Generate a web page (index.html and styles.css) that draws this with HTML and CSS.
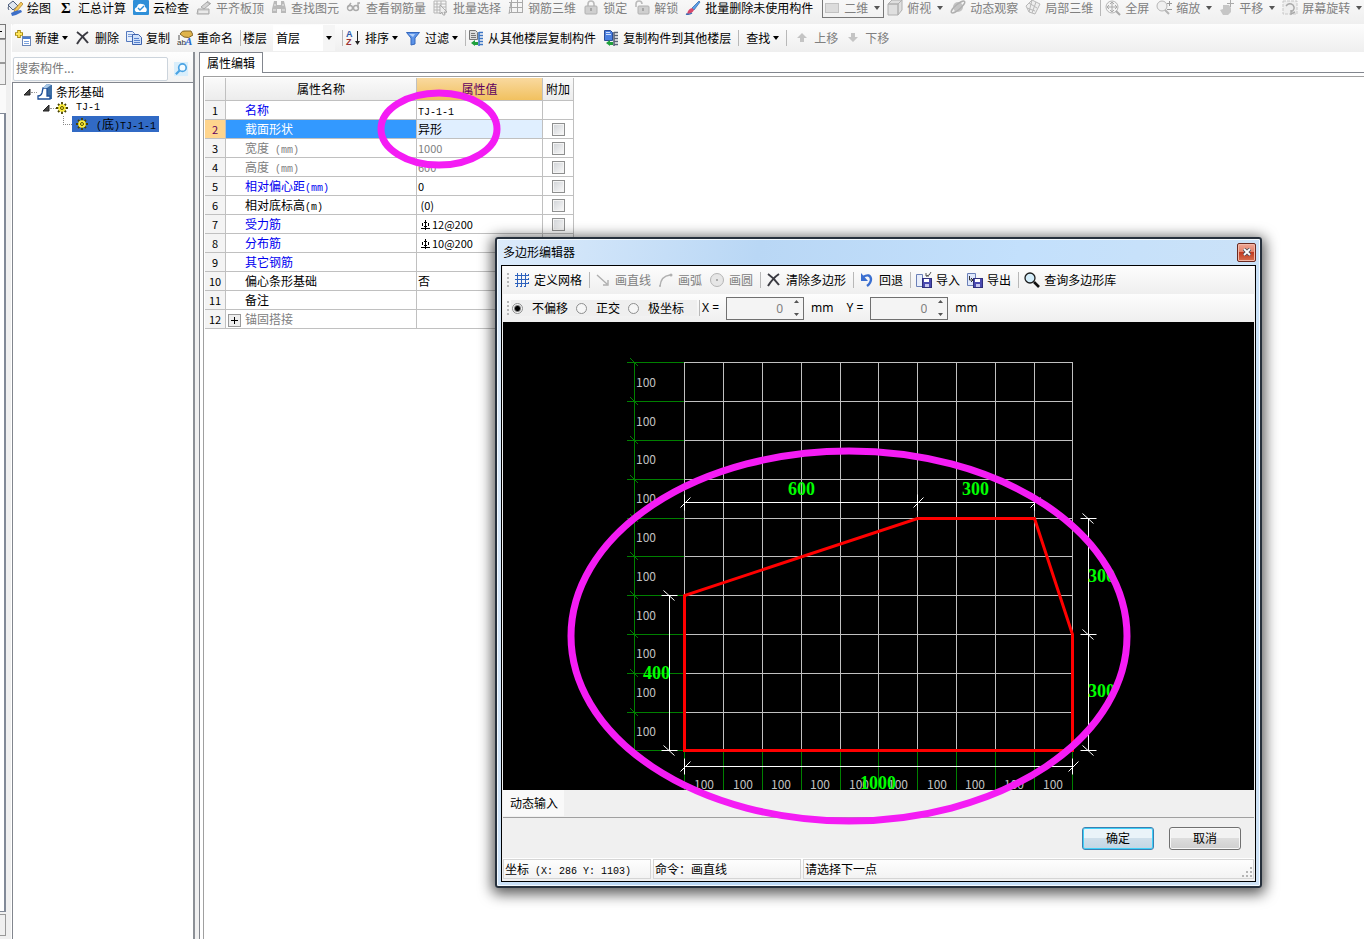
FILE: index.html
```html
<!DOCTYPE html>
<html lang="zh-CN">
<head>
<meta charset="utf-8">
<title>属性编辑</title>
<link rel="stylesheet" href="styles.css">
</head>
<body>
<svg class="defs" aria-hidden="true">
  <defs>
    <symbol id="i-draw" viewBox="0 0 16 16"><path d="M1 5l5-4 5 5-5 4z" fill="#dfe6f0" stroke="#4a5a78"/><path d="M2 6q-2 2 0 4" fill="none" stroke="#4a5a78"/><path d="M14 2l2 2-6 7-3 1 1-3z" fill="#f5c95a" stroke="#a5782a" stroke-width=".7"/><path d="M4 13q5-3 10-3l1 2q-5 3-10 4z" fill="#3d6fc8"/></symbol>
    <symbol id="i-cloud" viewBox="0 0 16 16"><rect width="16" height="15" rx="1" fill="#2f8fd8"/><path d="M3 12q-3-3 1-5 1-4 5-3 3 0 3 3 3 2 1 5z" fill="#fff"/><path d="M5 8l2 2 4-4" fill="none" stroke="#2f8fd8" stroke-width="1.400"/></symbol>
    <symbol id="i-slab" viewBox="0 0 16 16"><path d="M5 7l6-5 3 2-6 5zM11 1l4 3M2 9h11v5H1z" fill="#d4d4d4" stroke="#a8a8a8"/><path d="M3 12h9" stroke="#fff"/></symbol>
    <symbol id="i-binoc" viewBox="0 0 16 16"><path d="M3 1h3v4h4V1h3l2 8v4h-5V9H6v4H1V9z" fill="#b9b9b9"/><path d="M3 5h2M11 5h2M2 10h3M11 10h3" stroke="#eee"/></symbol>
    <symbol id="i-glasses" viewBox="0 0 16 16"><g fill="none" stroke="#aaa" stroke-width="1.400"><circle cx="4" cy="8" r="2.500"/><circle cx="10" cy="8" r="2.500"/><path d="M6.500 8h1M2 7l3-4M12 8V3h2"/></g></symbol>
    <symbol id="i-batch" viewBox="0 0 16 16"><path d="M1 1h12v12H1zM1 4h12M1 7h12M1 10h12M4 1v12M8 1v12" fill="none" stroke="#b5b5b5"/><path d="M7 5l7 7-3 0 1 3-2 0-1-3-2 2z" fill="#eee" stroke="#999" stroke-width=".7"/></symbol>
    <symbol id="i-mesh" viewBox="0 0 16 16"><path d="M3.500 0v12M9.500 0v13M14.500 0v13M1 2.500h14M1 7.500h14M1 12.500h14M3 2L1 14" fill="none" stroke="#aaa"/></symbol>
    <symbol id="i-lock" viewBox="0 0 16 16"><path d="M5 7V4q0-3 3-3t3 3v3" fill="none" stroke="#bbb" stroke-width="1.600"/><rect x="2" y="6" width="12" height="8" rx="1" fill="#cfcfcf" stroke="#b0b0b0"/><path d="M8 8v3" stroke="#999" stroke-width="1.500"/></symbol>
    <symbol id="i-unlock" viewBox="0 0 16 16"><path d="M2 7V4q0-3 3-3t3 3" fill="none" stroke="#bbb" stroke-width="1.600"/><rect x="4" y="6" width="11" height="8" rx="1" fill="#cfcfcf" stroke="#b0b0b0"/><path d="M9 8v3" stroke="#999" stroke-width="1.500"/></symbol>
    <symbol id="i-brush" viewBox="0 0 16 16"><path d="M14 1L7 8l2 2 6-8z" fill="#5aa0e8" stroke="#2d62a8" stroke-width=".7"/><path d="M7 8q-4 1-5 6 5 0 7-4z" fill="#d8486a"/><path d="M1 14q3 1 6-1" fill="none" stroke="#3968b0" stroke-width="1.500"/></symbol>
    <symbol id="i-rect" viewBox="0 0 16 16"><rect x="1.500" y="3.500" width="13" height="9" fill="#dcdcdc" stroke="#c2c2c2"/></symbol>
    <symbol id="i-cube" viewBox="0 0 16 16"><path d="M1 4l4-4h10l-4 4zM11 4l4-4v10l-4 5zM1 4h10v11H1z" fill="#dfdfdf" stroke="#b0b0b0"/></symbol>
    <symbol id="i-orbit" viewBox="0 0 16 16"><circle cx="8" cy="7" r="5" fill="#c4c4c4"/><ellipse cx="8" cy="7" rx="8.500" ry="2.500" transform="rotate(-40 8 7)" fill="none" stroke="#b0b0b0" stroke-width="1.400"/></symbol>
    <symbol id="i-part" viewBox="0 0 16 16"><path d="M1 6l6-6 8 4-5 10-6-2zM4 3l8 5M7 0l-3 12M11 2l-4 11M2 8l8 3" fill="#eee" stroke="#b8b8b8"/></symbol>
    <symbol id="i-full" viewBox="0 0 16 16"><circle cx="7" cy="7" r="6" fill="#f3f3f3" stroke="#b5b5b5"/><path d="M7 2v10M2 7h10M5 4l2-2 2 2M5 10l2 2 2-2M4 5L2 7l2 2M10 5l2 2-2 2" fill="none" stroke="#aaa"/><path d="M11 11l4 4" stroke="#aaa" stroke-width="2"/></symbol>
    <symbol id="i-zoom" viewBox="0 0 16 16"><circle cx="6" cy="6" r="5" fill="#f0f0f0" stroke="#b5b5b5"/><path d="M9 10l4 4" stroke="#b5b5b5" stroke-width="2"/><path d="M13.500 1v5M11 3.500h5M11 9.500h5" stroke="#999"/></symbol>
    <symbol id="i-pan" viewBox="0 0 16 16"><path d="M1 10l3-1V5h6l2 3v4l-3 3H4z" fill="#c6c6c6"/><path d="M11.500 0v7M8 3.500h7" fill="none" stroke="#aaa"/></symbol>
    <symbol id="i-rot" viewBox="0 0 16 16"><rect x="1" y="1" width="14" height="13" fill="#eee" stroke="#c8c8c8" stroke-dasharray="3 1"/><path d="M4 6q3-4 7-1 3 4-2 7M9 10v4l4-2" fill="none" stroke="#aaa" stroke-width="1.400"/></symbol>
    <symbol id="i-new" viewBox="0 0 16 16"><path d="M4 0v8M0 4h8" stroke="#a88a10" stroke-width="3.600"/><path d="M4 1v6M1 4h6" stroke="#ffe558" stroke-width="1.800"/><rect x="7.500" y="6.500" width="8" height="9" fill="#fff" stroke="#6a86b8"/><path d="M8 8h7" stroke="#4a7bd0" stroke-width="2"/><path d="M9 11.500h5M9 13.500h5" stroke="#7ba3df"/></symbol>
    <symbol id="i-x" viewBox="0 0 16 16"><path d="M2 2q6 4 11 11M13 2Q7 6 2 14" fill="none" stroke="#3b3b42" stroke-width="2"/></symbol>
    <symbol id="i-copy" viewBox="0 0 16 16"><path d="M.5 1.500h6l2 2v8h-8z" fill="#e4eefc" stroke="#5479be"/><path d="M2 4.500h4M2 6.500h4" stroke="#7a9bd8"/><path d="M6.500 4.500h6l3 3v7h-9z" fill="#cfe0fa" stroke="#3d62ad"/><path d="M8 8.500h5M8 10.500h6M8 12.500h6" stroke="#5a84cf"/></symbol>
    <symbol id="i-rename" viewBox="0 0 16 16"><path d="M3 4q2-4 6-3h5l2 4q-4 4-9 2z" fill="#dfb34b" stroke="#84662b"/><path d="M2 5v5" stroke="#555"/><text x="0" y="15" class="g-ab">ab</text><text x="8" y="15" class="g-a">A</text></symbol>
    <symbol id="i-sort" viewBox="0 0 16 16"><text x="1" y="7" class="g-sa">A</text><text x="1" y="15" class="g-sz">Z</text><path d="M12.500 1v12" stroke="#222"/><path d="M10 11h5l-2.500 4z" fill="#222"/></symbol>
    <symbol id="i-filter" viewBox="0 0 16 16"><path d="M1.500 2.500h13L10 8v6l-4 1V8z" fill="#5c93e8" stroke="#3568bd"/><path d="M4 4h6L8 7z" fill="#b5d2fb"/></symbol>
    <symbol id="i-from" viewBox="0 0 16 16"><path d="M1.500 .5h6l2 2v7h-8z" fill="#ddd" stroke="#777"/><path d="M3 3.500h4M3 5.500h5M3 7.500h5" stroke="#777"/><path d="M11 2v14M11 2.500h4M11 5.500h4M11 8.500h4M11 11.500h4M11 14.500h4" stroke="#3d76c4" stroke-width="1.600"/><path d="M3 13l4-3v2h3v3H7v1z" fill="#1fa03c"/></symbol>
    <symbol id="i-to" viewBox="0 0 16 16"><path d="M1.500 .5h6l2 2v8h-8z" fill="#4a7fe0" stroke="#2b4d98"/><path d="M3 2.500h4M3 4.500h5" stroke="#cfe0ff"/><path d="M11 2v14M11 2.500h4M11 5.500h4M11 8.500h4M11 11.500h4M11 14.500h4" stroke="#5a6478" stroke-width="1.600"/><path d="M3 13l4-3v2h3v3H7v1z" fill="#1fa03c"/></symbol>
    <symbol id="i-up" viewBox="0 0 16 16"><path d="M8 3l5 5h-3v4H6V8H3z" fill="#c4c4c4"/></symbol>
    <symbol id="i-down" viewBox="0 0 16 16"><path d="M8 12L3 7h3V3h4v4h3z" fill="#c4c4c4"/></symbol>
    <symbol id="i-search" viewBox="0 0 16 16"><rect width="15" height="15" fill="#d9eefb"/><circle cx="9" cy="6" r="4" fill="#f4fbff" stroke="#4ba3e3" stroke-width="1.800"/><path d="M6 9l-4 4" stroke="#4ba3e3" stroke-width="2.400"/></symbol>
    <symbol id="i-found" viewBox="0 0 16 16"><path d="M6 4l4-4 5 1v14h-4z" fill="#3d6ea5"/><path d="M1 15v-3q3 0 4-3l1-5h4v8h3v3z" fill="#fff" stroke="#1e4f98" stroke-width="1.300"/><path d="M6 4l4-4 4 1-4 3z" fill="#a9c9e8"/></symbol>
    <symbol id="i-gear" viewBox="0 0 12 12"><path d="M6 0v12M0 6h12M2 2l8 8M10 2l-8 8" stroke="#4a4400" stroke-width="1.800"/><circle cx="6" cy="6" r="3.800" fill="#ffef3a"/><circle cx="6" cy="6" r="1.500" fill="none" stroke="#5a5200"/></symbol>
    <symbol id="i-grid" viewBox="0 0 16 16"><path d="M3.500 1v14M7.500 1v14M11.500 1v14M1 3.500h14M1 7.500h14M1 11.500h14" stroke="#2e62bd"/><path d="M14.500 2v12M2 14.500h12" stroke="#2e62bd" stroke-dasharray="2 2"/></symbol>
    <symbol id="i-line" viewBox="0 0 16 16"><path d="M2 3l10 9M13 8v5H8" fill="none" stroke="#b0b0b0" stroke-width="1.400"/></symbol>
    <symbol id="i-arc" viewBox="0 0 16 16"><path d="M2 14Q3 4 12 3" fill="none" stroke="#b0b0b0" stroke-width="1.400"/><circle cx="13" cy="3" r="1.500" fill="#b0b0b0"/><circle cx="2" cy="14" r="1" fill="#b0b0b0"/></symbol>
    <symbol id="i-circle" viewBox="0 0 16 16"><circle cx="8" cy="8" r="6.500" fill="#e6e6e6" stroke="#b5b5b5"/><circle cx="8" cy="8" r="1" fill="#999"/></symbol>
    <symbol id="i-undo" viewBox="0 0 16 16"><path d="M4 5q7-4 8 2 0 4-4 7" fill="none" stroke="#3b6fd0" stroke-width="2.400"/><path d="M2 1v8h7z" fill="#3b6fd0"/></symbol>
    <symbol id="i-import" viewBox="0 0 16 16"><path d="M.5 2.500h6v12h-6z" fill="#e8eefb" stroke="#6b80b8"/><path d="M10 4q4 0 5-4M10 1v3h3" fill="none" stroke="#555"/><rect x="6.500" y="6.500" width="9" height="9" fill="#4a4ab0" stroke="#30307c"/><path d="M8 7h5v3H8z" fill="#fff"/><path d="M9 12h4v3H9z" fill="#c8c8f0"/></symbol>
    <symbol id="i-export" viewBox="0 0 16 16"><path d="M.5 1.500h8v12h-8z" fill="#dfe8fb" stroke="#6b80b8"/><path d="M2.500 4v4h3M4 6l2 2-2 2" fill="none" stroke="#333"/><rect x="6.500" y="6.500" width="9" height="9" fill="#4a4ab0" stroke="#30307c"/><path d="M8 7h5v3H8z" fill="#fff"/><path d="M9 12h4v3H9z" fill="#c8c8f0"/></symbol>
    <symbol id="i-query" viewBox="0 0 16 16"><circle cx="6" cy="6" r="5" fill="#d3edfa" stroke="#1c1c1c" stroke-width="1.300"/><path d="M10 10l5 5" stroke="#111" stroke-width="2.600"/></symbol>
    <symbol id="i-rebar" viewBox="0 0 10 10"><path d="M4.500 0v10M3 2.500h3M3 6.500h3M1.500 3v3M7.500 3v3M0 8.500h9" fill="none" stroke="#000"/></symbol>
    <symbol id="i-arrow" viewBox="0 0 6 4"><path d="M0 0h6L3 4z" fill="currentColor"/></symbol>
    <symbol id="i-twisty" viewBox="0 0 8 8"><path d="M7 1v6H1z" fill="#444" stroke="#222"/></symbol>
  </defs>
</svg>

<header class="toolbar top-bar">
  <button class="tool"><svg><use href="#i-draw"/></svg>绘图</button>
  <button class="tool"><span class="sigma">Σ</span>汇总计算</button>
  <button class="tool"><svg><use href="#i-cloud"/></svg>云检查</button>
  <button class="tool off"><svg><use href="#i-slab"/></svg>平齐板顶</button>
  <button class="tool off"><svg><use href="#i-binoc"/></svg>查找图元</button>
  <button class="tool off"><svg><use href="#i-glasses"/></svg>查看钢筋量</button>
  <button class="tool off"><svg><use href="#i-batch"/></svg>批量选择</button>
  <button class="tool off"><svg><use href="#i-mesh"/></svg>钢筋三维</button>
  <button class="tool off"><svg><use href="#i-lock"/></svg>锁定</button>
  <button class="tool off"><svg><use href="#i-unlock"/></svg>解锁</button>
  <button class="tool"><svg><use href="#i-brush"/></svg>批量删除未使用构件</button>
  <button class="tool off boxed"><svg><use href="#i-rect"/></svg>二维<svg class="arrow"><use href="#i-arrow"/></svg></button>
  <button class="tool off"><svg><use href="#i-cube"/></svg>俯视<svg class="arrow"><use href="#i-arrow"/></svg></button>
  <button class="tool off"><svg><use href="#i-orbit"/></svg>动态观察</button>
  <button class="tool off"><svg><use href="#i-part"/></svg>局部三维</button>
  <span class="sep"></span>
  <button class="tool off"><svg><use href="#i-full"/></svg>全屏</button>
  <button class="tool off"><svg><use href="#i-zoom"/></svg>缩放<svg class="arrow"><use href="#i-arrow"/></svg></button>
  <button class="tool off"><svg><use href="#i-pan"/></svg>平移<svg class="arrow"><use href="#i-arrow"/></svg></button>
  <button class="tool off"><svg><use href="#i-rot"/></svg>屏幕旋转<svg class="arrow"><use href="#i-arrow"/></svg></button>
</header>

<div class="workspace">
  <aside class="dock">
    <div class="dock-close"></div>
    <div class="dock-tab tall"></div>
    <div class="dock-tab"></div>
    <div class="dock-gap"></div>
    <div class="dock-pane"></div>
    <div class="dock-tab last"></div>
  </aside>
  <div class="content">
    <div class="toolbar sub-bar">
      <button class="tool"><svg><use href="#i-new"/></svg>新建<svg class="arrow"><use href="#i-arrow"/></svg></button>
      <button class="tool"><svg><use href="#i-x"/></svg>删除</button>
      <button class="tool"><svg><use href="#i-copy"/></svg>复制</button>
      <button class="tool"><svg><use href="#i-rename"/></svg>重命名</button>
      <span class="sep"></span>
      <label class="floor">楼层<span class="combo"><select><option>首层</option></select><svg class="arrow"><use href="#i-arrow"/></svg></span></label>
      <span class="sep"></span>
      <button class="tool"><svg><use href="#i-sort"/></svg>排序<svg class="arrow"><use href="#i-arrow"/></svg></button>
      <button class="tool"><svg><use href="#i-filter"/></svg>过滤<svg class="arrow"><use href="#i-arrow"/></svg></button>
      <span class="sep"></span>
      <button class="tool"><svg><use href="#i-from"/></svg>从其他楼层复制构件</button>
      <button class="tool"><svg><use href="#i-to"/></svg>复制构件到其他楼层</button>
      <span class="sep wide"></span>
      <button class="tool">查找<svg class="arrow"><use href="#i-arrow"/></svg></button>
      <span class="sep wide"></span>
      <button class="tool off"><svg><use href="#i-up"/></svg>上移</button>
      <button class="tool off"><svg><use href="#i-down"/></svg>下移</button>
    </div>
    <div class="panes">
      <nav class="nav">
        <form class="search">
          <input type="text" placeholder="搜索构件..." aria-label="搜索构件">
          <button type="button" aria-label="搜索"><svg><use href="#i-search"/></svg></button>
        </form>
        <ul class="tree">
          <li class="node l1"><svg class="twisty"><use href="#i-twisty"/></svg><i class="dots"></i><svg><use href="#i-found"/></svg><span>条形基础</span></li>
          <li class="node l2"><svg class="twisty"><use href="#i-twisty"/></svg><i class="dots"></i><svg class="gear"><use href="#i-gear"/></svg><span class="mono">TJ-1</span></li>
          <li class="node l3"><i class="elbow"></i><span class="selected"><svg class="gear"><use href="#i-gear"/></svg><span><span class="mono">(</span>底<span class="mono">)TJ-1-1</span></span></span></li>
        </ul>
      </nav>
      <main class="props">
        <div class="tabs"><button class="tab">属性编辑</button></div>
        <div class="sheet">
          <table class="grid">
            <colgroup><col class="c-no"><col class="c-name"><col class="c-val"><col class="c-add"></colgroup>
            <thead><tr><th></th><th>属性名称</th><th class="hot">属性值</th><th>附加</th></tr></thead>
            <tbody>
              <tr><th>1</th><td class="name blue">名称</td><td><span class="mono">TJ-1-1</span></td><td></td></tr>
              <tr class="current"><th>2</th><td class="name">截面形状</td><td>异形</td><td class="chk"><input type="checkbox" aria-label="附加 截面形状"></td></tr>
              <tr class="dim"><th>3</th><td class="name">宽度<span class="mono"> (mm)</span></td><td><span class="num">1000</span></td><td class="chk"><input type="checkbox" aria-label="附加 宽度"></td></tr>
              <tr class="dim"><th>4</th><td class="name">高度<span class="mono"> (mm)</span></td><td><span class="num">600</span></td><td class="chk"><input type="checkbox" aria-label="附加 高度"></td></tr>
              <tr><th>5</th><td class="name blue">相对偏心距<span class="mono">(mm)</span></td><td><span class="num">0</span></td><td class="chk"><input type="checkbox" aria-label="附加 相对偏心距"></td></tr>
              <tr><th>6</th><td class="name">相对底标高<span class="mono">(m)</span></td><td><span class="num">&nbsp;(0)</span></td><td class="chk"><input type="checkbox" aria-label="附加 相对底标高"></td></tr>
              <tr><th>7</th><td class="name blue">受力筋</td><td><svg class="rebar"><use href="#i-rebar"/></svg><span class="num">12@200</span></td><td class="chk"><input type="checkbox" aria-label="附加 受力筋"></td></tr>
              <tr><th>8</th><td class="name blue">分布筋</td><td><svg class="rebar"><use href="#i-rebar"/></svg><span class="num">10@200</span></td><td class="chk"><input type="checkbox" aria-label="附加 分布筋"></td></tr>
              <tr><th>9</th><td class="name blue">其它钢筋</td><td></td><td class="chk"><input type="checkbox" aria-label="附加 其它钢筋"></td></tr>
              <tr><th>10</th><td class="name">偏心条形基础</td><td>否</td><td class="chk"><input type="checkbox" aria-label="附加 偏心条形基础"></td></tr>
              <tr><th>11</th><td class="name">备注</td><td></td><td class="chk"><input type="checkbox" aria-label="附加 备注"></td></tr>
              <tr class="dim"><th>12</th><td class="name group"><button class="plus" aria-label="展开"></button>锚固搭接</td><td></td><td></td></tr>
            </tbody>
          </table>
        </div>
      </main>
    </div>
  </div>
</div>

<section class="dialog" role="dialog" aria-label="多边形编辑器">
  <div class="title"><h1>多边形编辑器</h1><button class="close" aria-label="关闭"><svg viewBox="0 0 8 8"><path d="M1 1l6 6M7 1L1 7" stroke="#444c5c" stroke-width="3.400"/><path d="M1 1l6 6M7 1L1 7" stroke="#fff" stroke-width="1.800"/></svg></button></div>
  <div class="frame">
    <div class="toolbar dlg-bar">
      <i class="grip"></i>
      <button class="tool"><svg><use href="#i-grid"/></svg>定义网格</button>
      <span class="sep"></span>
      <button class="tool off"><svg><use href="#i-line"/></svg>画直线</button>
      <button class="tool off"><svg><use href="#i-arc"/></svg>画弧</button>
      <button class="tool off"><svg><use href="#i-circle"/></svg>画圆</button>
      <span class="sep"></span>
      <button class="tool"><svg><use href="#i-x"/></svg>清除多边形</button>
      <span class="sep"></span>
      <button class="tool"><svg><use href="#i-undo"/></svg>回退</button>
      <span class="sep"></span>
      <button class="tool"><svg><use href="#i-import"/></svg>导入</button>
      <button class="tool"><svg><use href="#i-export"/></svg>导出</button>
      <span class="sep"></span>
      <button class="tool"><svg><use href="#i-query"/></svg>查询多边形库</button>
    </div>
    <div class="toolbar offset-bar">
      <i class="grip"></i>
      <div class="modes">
        <label><input type="radio" name="mode" checked>不偏移</label>
        <label><input type="radio" name="mode">正交</label>
        <label><input type="radio" name="mode">极坐标</label>
      </div>
      <span class="sep"></span>
      <label class="axis">X =<span class="spin"><input type="text" value="0" disabled><svg viewBox="0 0 5 16"><path d="M0 3h5L2.500 0zM0 13h5L2.500 16z" fill="#555"/></svg></span>mm</label>
      <label class="axis">Y =<span class="spin"><input type="text" value="0" disabled><svg viewBox="0 0 5 16"><path d="M0 3h5L2.500 0zM0 13h5L2.500 16z" fill="#555"/></svg></span>mm</label>
    </div>
    <svg class="canvas" viewBox="0 0 751 468" preserveAspectRatio="xMinYMin meet">
      <defs>
        <path id="tick" d="M-4-4l8 8"/>
        <path id="slash" d="M-4 5l10-10M0-8v16"/>
        <path id="back" d="M-6-5l11 10M-8 0h16"/>
      </defs>
      <path class="green" d="M131.500 40v388M124 40.500h57M124 79.500h57M124 118.500h57M124 157.500h57M124 196.500h57M124 234.500h57M124 273.500h57M124 312.500h57M124 351.500h57M124 390.500h57M124 428.500h57M181.500 428v40M220.500 428v40M259.500 428v40M298.500 428v40M337.500 428v40M375.500 428v40M414.500 428v40M453.500 428v40M492.500 428v40M531.500 428v40M569.500 428v40"/>
      <g class="green"><use href="#tick" x="131" y="40"/><use href="#tick" x="131" y="79"/><use href="#tick" x="131" y="118"/><use href="#tick" x="131" y="157"/><use href="#tick" x="131" y="196"/><use href="#tick" x="131" y="234"/><use href="#tick" x="131" y="273"/><use href="#tick" x="131" y="312"/><use href="#tick" x="131" y="351"/><use href="#tick" x="131" y="390"/></g>
      <path class="mesh" d="M181 40.500h389M181 79.500h389M181 118.500h389M181 157.500h389M181 196.500h389M181 234.500h389M181 273.500h389M181 312.500h389M181 351.500h389M181 390.500h389M181.500 40v388M220.500 40v388M259.500 40v388M298.500 40v388M337.500 40v388M375.500 40v388M414.500 40v388M453.500 40v388M492.500 40v388M531.500 40v388M569.500 40v388"/>
      <g class="scale">
        <text x="133" y="65">100</text><text x="133" y="104">100</text><text x="133" y="142">100</text><text x="133" y="181">100</text><text x="133" y="220">100</text><text x="133" y="259">100</text><text x="133" y="298">100</text><text x="133" y="336">100</text><text x="133" y="375">100</text><text x="133" y="414">100</text>
        <text x="191" y="467">100</text><text x="230" y="467">100</text><text x="268" y="467">100</text><text x="307" y="467">100</text><text x="346" y="467">100</text><text x="385" y="467">100</text><text x="424" y="467">100</text><text x="462" y="467">100</text><text x="501" y="467">100</text><text x="540" y="467">100</text>
      </g>
      <g class="dims">
        <path d="M181 180.500h350M585.500 196v232M166.500 273v155M181 444.500h388"/>
        <use href="#slash" x="181.500" y="180.500"/><use href="#slash" x="414.500" y="180.500"/><use href="#slash" x="531.500" y="180.500"/>
        <use href="#back" x="585.500" y="196.500"/><use href="#back" x="585.500" y="312.500"/><use href="#back" x="585.500" y="428.500"/>
        <use href="#back" x="166.500" y="273.500"/><use href="#back" x="166.500" y="428.500"/>
        <use href="#slash" x="181.500" y="444.500"/><use href="#slash" x="569.500" y="444.500"/>
      </g>
      <path class="shape" d="M181.500 428.500V273.500L414.500 196.500H531.500L569.500 312.500V428.500z"/>
      <g class="values"><text x="285" y="173">600</text><text x="459" y="173">300</text><text x="140" y="357">400</text><text x="585" y="260">300</text><text x="585" y="375">300</text><text x="357" y="467">1000</text></g>
    </svg>
    <div class="dynamic"><button>动态输入</button></div>
    <div class="actions"><button class="btn primary">确定</button><button class="btn">取消</button></div>
    <footer class="status"><span>坐标<span class="mono"> (X: 286 Y: 1103)</span></span><span>命令：画直线</span><span>请选择下一点<svg class="sizer" viewBox="0 0 11 11"><path d="M8 0h2v2H8zM4 4h2v2H4zM8 4h2v2H8zM0 8h2v2H0zM4 8h2v2H4zM8 8h2v2H8z" fill="#b5b5b5"/></svg></span></footer>
  </div>
</section>

<svg class="marks" aria-hidden="true">
  <ellipse cx="439" cy="129" rx="58" ry="36"/>
  <ellipse cx="849" cy="636" rx="278" ry="185"/>
</svg>
</body>
</html>
```
FILE: styles.css
```css
* { box-sizing: border-box; }

body {
  margin: 0;
  height: 100vh;
  display: flex;
  flex-direction: column;
  overflow: hidden;
  background: #f0f0f0;
  color: #000;
  font: 12px/16px "Noto Sans CJK SC", sans-serif;
  white-space: nowrap;
}

button, input, select { font: inherit; color: inherit; }
button { margin: 0; padding: 0; border: 0; background: none; }
svg { display: block; flex: none; }
.defs { position: absolute; width: 0; height: 0; }
.mono { font: 10px/10px "Liberation Mono", monospace; white-space: pre; }
.num { font-size: 11px; line-height: 11px; }

/* toolbars */
.toolbar { display: flex; align-items: center; gap: 7px; background: linear-gradient(#fdfdfd, #efefef); }
.tool { display: flex; align-items: center; gap: 4px; height: 16px; flex: none; }
.tool svg { width: 16px; height: 16px; }
.tool svg.arrow, .arrow { width: 6px; height: 4px; }
.off { color: #808080; }
.sep { flex: none; width: 1px; height: 16px; background: #b8b8b8; }

.top-bar { height: 24px; padding: 0 0 8px 7px; background: linear-gradient(#f8f8f8, #efefef); flex: none; }
.top-bar .arrow { margin-left: 2px; color: #555; }
.top-bar .sep { margin-right: -3px; }
.sigma { width: 16px; font: bold 15px/16px "Liberation Serif", serif; }
.boxed { height: 20px; margin: 0 -4px 0 2px; padding: 0 3px 0 1px; border: 1px solid #777; }

.sub-bar { height: 28px; padding-left: 3px; flex: none; border-radius: 3px 0 0 0; }
.sub-bar .arrow { margin-left: -1px; }
.sub-bar .sep { margin-right: -5px; }
.sub-bar .sep.wide { margin-right: 0; }
.floor { display: flex; align-items: center; gap: 6px; }
.combo { display: flex; align-items: center; width: 62px; height: 26px; background: #fff; }
.combo select { flex: 1; min-width: 0; height: 26px; padding: 0 3px; border: 0; background: #fff; appearance: none; }
.combo svg.arrow { width: 12px; height: 26px; padding: 11px 3px; margin: 0; background: #f5f5f5; }

/* text inside the rename and sort icons */
.g-ab { font: 8px "Liberation Sans", sans-serif; fill: #333; }
.g-a { font: italic bold 11px "Liberation Serif", serif; fill: #2a66c8; }
.g-sa { font: bold 9px "Liberation Sans", sans-serif; fill: #2a57a8; }
.g-sz { font: bold 9px "Liberation Sans", sans-serif; fill: #9a3030; }

/* workspace */
.workspace { flex: 1; display: flex; min-height: 0; }
.dock { width: 12px; flex: none; display: flex; flex-direction: column; padding-right: 5px; border-right: 1px solid #fff; }
.dock-close { height: 15px; border: 1px solid #777; border-left: 0; background: linear-gradient(#000, #000) 0 6px / 2px 1px no-repeat; }
.dock-tab { height: 22px; border: 1px solid #999; border-left: 0; }
.dock-tab.tall { height: 24px; }
.dock-tab.last { margin: 2px 0 3px; }
.dock-gap { height: 28px; background: #fafafa; }
.dock-pane { flex: 1; border: 1px solid #828a98; border-left: 0; border-right-width: 2px; background: #fff; }
.content { flex: 1; min-width: 0; display: flex; flex-direction: column; }
.panes { flex: 1; min-height: 0; display: flex; gap: 4px; }

.nav { width: 183px; flex: none; display: flex; flex-direction: column; border-right: 2px solid #8c9096; }
.search { display: flex; align-items: center; height: 30px; padding: 4px 4px 0 1px; background: linear-gradient(#fefefe, #f2f2f2); }
.search input { flex: 1; min-width: 0; height: 24px; padding: 0 2px 3px; border: 1px solid #ccd4dc; border-radius: 2px; background: #fff; }
.search input::placeholder { color: #777; opacity: 1; }
.search button { padding-left: 6px; }
.search svg { width: 15px; height: 15px; }
.tree { flex: 1; margin: 0; padding: 1px 0 0; list-style: none; background: #fff; border: solid #82868e; border-width: 1px 0 0 1px; }
.node { display: flex; align-items: center; height: 16px; }
.node svg { width: 16px; height: 16px; }
.node .twisty { width: 8px; height: 8px; }
.node .gear { width: 12px; height: 12px; }
.node .dots { width: 6px; border-top: 1px dotted #999; }
.l1 { padding-left: 10px; }
.l1 > span { padding-left: 3px; }
.l2 { padding-left: 29px; }
.l2 > span { padding-left: 8px; }
.l3 { padding-left: 50px; }
.elbow { width: 9px; height: 9px; margin-top: -8px; border: dotted #888; border-width: 0 0 1px 1px; }
.selected { display: flex; align-items: center; gap: 8px; height: 16px; padding: 0 3px 0 4px; background: #316ac5; }

/* property sheet */
.props { flex: 1; min-width: 0; display: flex; flex-direction: column; background: #fff; border-left: 1px solid #82868e; }
.tabs { height: 21px; display: flex; border-bottom: 1px solid #82868e; flex: none; }
.tab { height: 21px; padding: 0 7px; border: solid #82868e; border-width: 1px 1px 0 0; background: #fff; }
.sheet { flex: 1; margin: 3px 0 0 3px; padding: 1px; border: solid #a0a0a0; border-width: 1px 0 0 1px; }
.grid { table-layout: fixed; width: 369px; border-collapse: separate; border-spacing: 0; }
.c-no { width: 21px; }
.c-name { width: 191px; }
.c-val { width: 126px; }
.c-add { width: 31px; }
.grid th, .grid td { height: 19px; padding: 0 1px; border: solid #c0c0c0; border-width: 0 1px 1px 0; line-height: 16px; text-align: left; }
.grid th { text-align: center; font-weight: normal; background: linear-gradient(#fafafa, #ececec); }
.grid tbody th { font: 11px/16px "Noto Sans CJK SC", sans-serif; background: #f4f4f4; }
.grid thead th { height: 23px; }
.grid thead .hot { background: linear-gradient(#f9d99f, #f1c15f); color: #600060; }
.grid .name { padding-left: 19px; }
.blue { color: #0000f0; }
.dim td { color: #808080; }
.grid .current th { background: #ffd58d; color: #600060; }
.current td:nth-child(3) { background: #e0efff; }
.current .name { background: #3399ff; color: #fff; }
.chk input { appearance: none; display: block; width: 13px; height: 13px; margin: 0 auto; border: 1px solid #8e8f8f; background: linear-gradient(135deg, #cfd2d6, #fafafa); box-shadow: inset 0 0 0 1px #f4f4f4; }
.grid .group { padding-left: 2px; }
.plus { width: 13px; height: 13px; margin-right: 4px; vertical-align: -2px; border: 1px solid #999; background: linear-gradient(#000, #000) center / 7px 1px no-repeat, linear-gradient(#000, #000) center / 1px 7px no-repeat, #eee; }
.rebar { display: inline-block; width: 10px; height: 10px; margin: 0 1px 0 3px; vertical-align: -1px; }

/* dialog window floats over the sheet */
.dialog { position: absolute; left: 495px; top: 237px; width: 767px; padding: 0 4px 4px; border: 2px solid #26303c; border-radius: 3px; background: linear-gradient(100deg, #dcebfb, #b9d7f5 30%, #c3e0fc 60%, #cfe3f6); box-shadow: 0 3px 14px 3px rgba(0, 0, 0, .65), inset 0 0 0 1px #f4faff; }
.title { display: flex; align-items: center; justify-content: space-between; height: 26px; }
.title h1 { margin: 0; padding-left: 2px; font: inherit; }
.close { display: grid; place-items: center; width: 19px; height: 19px; border: 1px solid #6a2a22; border-radius: 2px; background: linear-gradient(#f0a898, #e08068 48%, #c03a20 50%, #d87050); box-shadow: inset 0 0 0 1px #f2b8a8; }
.close svg { width: 8px; height: 8px; }
.frame { border: 1px solid #000; padding: 0 1px; background: #f0f0f0; }
.dlg-bar { height: 28px; padding-left: 4px; }
.dlg-bar .sep { margin-right: -2px; }
.dlg-bar .grip { margin-right: -2px; }
.grip { width: 2px; height: 15px; background: repeating-linear-gradient(#b8b8b8 0 2px, transparent 2px 4px); }
.offset-bar { height: 28px; padding-left: 4px; gap: 2px; }
.modes { display: flex; gap: 8px; padding: 0 13px 0 1px; background: #efefef; }
.modes label { display: flex; align-items: center; gap: 9px; }
.modes input { appearance: none; width: 11px; height: 11px; margin: 0; border: 1px solid #8e8f8f; border-radius: 50%; background: #f6f6f6; }
.modes input:checked { background: radial-gradient(#000 0 2px, #f6f6f6 4px); }
.axis { display: flex; align-items: center; gap: 7px; margin-right: 11px; font: 12px/16px "Noto Sans", sans-serif; }
.spin { display: flex; align-items: center; width: 78px; height: 23px; padding-right: 4px; border: 1px solid #707070; background: #f4f4f4; }
.spin input { flex: 1; min-width: 0; height: 21px; padding: 0 11px 0 0; border: 0; background: none; color: #808080; text-align: right; }
.spin svg { width: 5px; height: 16px; }

.canvas { width: 100%; background: #000; }
.green { fill: none; stroke: #008000; }
.mesh { fill: none; stroke: #c0c0c0; }
.dims { fill: none; stroke: #fff; }
.shape { fill: none; stroke: #f00; stroke-width: 3; }
.scale { fill: #c0c0c0; font: 12px "Noto Sans CJK SC", sans-serif; }
.values { fill: #0f0; font: bold 18px "Liberation Serif", serif; }

.dynamic { height: 28px; border-bottom: 1px solid #a0a0a0; }
.dynamic button { height: 26px; padding: 0 6px 0 7px; background: #f9f9f9; }
.actions { display: flex; justify-content: flex-end; align-items: center; gap: 15px; height: 40px; padding-right: 13px; }
.btn { width: 72px; height: 23px; border: 1px solid #707070; border-radius: 3px; background: linear-gradient(#f2f2f2 48%, #dddddd 50%, #cfcfcf); box-shadow: inset 0 0 0 1px #f8f8f8; }
.btn.primary { border-color: #3c7fb1; background: linear-gradient(#eaf3f9 48%, #cfdfeb 50%, #c2d6e4); box-shadow: inset 0 0 0 1px #3fd0f8; }
.status { display: flex; gap: 2px; padding-top: 1px; height: 23px; background: linear-gradient(#fff, #f1f1f1); }
.status > span { width: 148px; height: 20px; padding-left: 1px; border: 1px solid #d5d5d5; line-height: 18px; }
.status > span:last-child { flex: 1; display: flex; justify-content: space-between; align-items: flex-end; }
.sizer { width: 11px; height: 11px; }

.marks { position: absolute; inset: 0; width: 100%; height: 100%; pointer-events: none; }
.marks ellipse { fill: none; stroke: #f41cf4; stroke-width: 7; }
```
